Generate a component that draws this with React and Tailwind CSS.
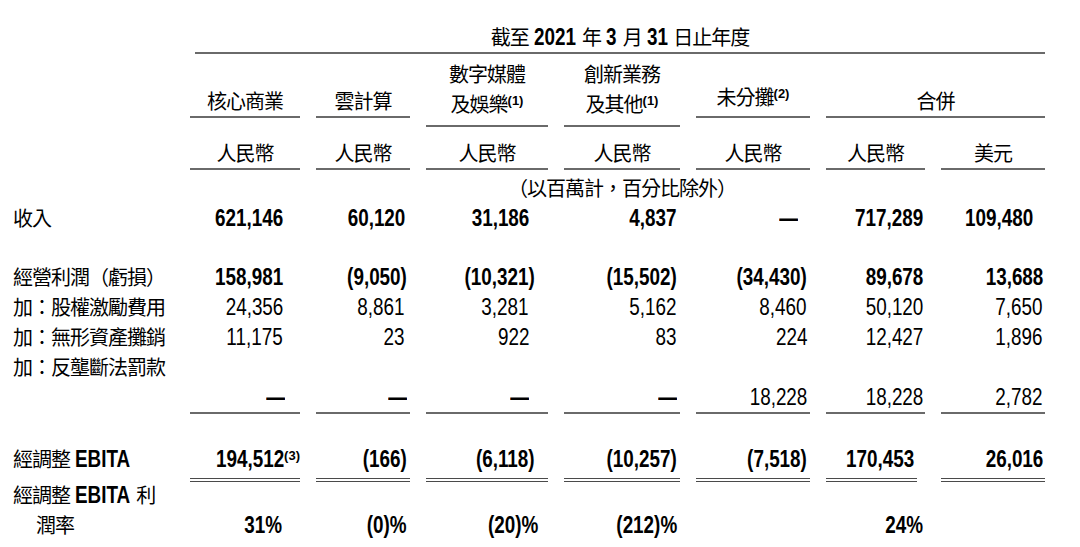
import React from 'react';

const NUM = "font-['Liberation_Sans',sans-serif] text-[23px] tracking-normal";
const CJK = "font-['Noto_Sans_CJK_TC','Noto_Sans_CJK_SC',sans-serif] text-[20px] tracking-[-1px]";
const SUP = "relative -top-[7px] font-['Liberation_Sans',sans-serif] text-[13px] font-bold tracking-normal";
const GRID = 'grid grid-cols-[161px_110px_94px_122px_116px_114px_99px_104px] gap-x-4';
const LINE = 'border-b-2 border-[#6a6a6a]';
const DOUBLE = 'border-b-4 border-double border-[#4a4a4a]';

// right padding per column, plain numbers and numbers in brackets
const pad = ['pr-[17px]', 'pr-[5px]', 'pr-[19px]', 'pr-[3px]', 'pr-[3px]', 'pr-[2px]', 'pr-[2px]'];
const padParen = ['pr-[17px]', 'pr-[3px]', 'pr-[13px]', 'pr-[3px]', 'pr-[3px]', 'pr-[2px]', 'pr-[2px]'];

// narrow figures inside running text: scaled, with the spare width taken back by a negative margin
const Narrow = ({ children, mr }) => (
	<span className={`${NUM} font-bold inline-block scale-x-[0.82] origin-left ml-[2px] ${mr}`}>{children}</span>
);

const rows = [
	{
		label: '收入', bold: true, mt: 'mt-0',
		values: ['621,146', '60,120', '31,186', '4,837', ['—', 'pr-[12px]'], '717,289', ['109,480', 'pr-[12px]']]
	},
	{
		label: '經營利潤（虧損）', bold: true, mt: 'mt-[29px]',
		values: ['158,981', '(9,050)', '(10,321)', '(15,502)', '(34,430)', '89,678', '13,688']
	},
	{
		label: '加：股權激勵費用', mt: 'mt-0',
		values: ['24,356', '8,861', '3,281', '5,162', '8,460', '50,120', '7,650']
	},
	{
		label: '加：無形資產攤銷', mt: 'mt-0',
		values: ['11,175', '23', '922', '83', '224', '12,427', '1,896']
	},
	{
		label: '加：反壟斷法罰款', mt: 'mt-0',
		values: ['', '', '', '', '', '', '']
	},
	{
		label: '', mt: 'mt-0', line: LINE,
		values: [['—', 'pr-[15px] font-bold'], ['—', 'pr-[3px] font-bold'], ['—', 'pr-[19px] font-bold'], ['—', 'pr-[3px] font-bold'], '18,228', '18,228', '2,782']
	},
	{
		label: <>經調整 <Narrow mr="-mr-[10px]">EBITA</Narrow></>, bold: true, mt: 'mt-[30px]', line: DOUBLE,
		values: [
			['194,512', 'pr-0', <span className={SUP}>(3)</span>],
			'(166)', '(6,118)', '(10,257)', '(7,518)',
			['170,453', 'pr-[3px] mr-[8px]'],
			'26,016'
		]
	}
];

function Cell({ v, i, line, bold }) {
	const [text, pr, after] = Array.isArray(v) ? v : [v, null, null];
	const p = pr || (text.startsWith('(') ? padParen[i] : pad[i]);
	return (
		<div className={`${NUM} ${bold ? 'font-bold' : ''} text-right ${p} ${text === '' ? '' : line || ''}`}>
			{text === '' ? '\u00a0' : <span className="inline-block scale-x-[0.82] origin-right">{text}</span>}
			{after}
		</div>
	);
}

export default function App() {
	return (
		<div className="w-[1080px] h-[547px] overflow-hidden bg-white pl-[13px] text-black leading-[30px]">
			<div className={`${GRID} h-[54px] items-end`}>
				<div className={`col-start-2 col-span-7 ml-[5px] text-center ${CJK} ${LINE}`}>
					截至 <Narrow mr="-mr-[7px]">2021</Narrow> 年 <Narrow mr="mr-0">3</Narrow> 月 <Narrow mr="-mr-[3px]">31</Narrow> 日止年度
				</div>
			</div>

			<div className={`${GRID} h-[73px] items-end ${CJK}`}>
				<div></div>
				<div className={`text-center mb-[9px] ${LINE}`}>核心商業</div>
				<div className={`text-center mb-[9px] ${LINE}`}>雲計算</div>
				<div className={`text-center pb-[2px] ${LINE}`}>
					<div>數字媒體</div>
					<div>及娛樂<span className={SUP}>(1)</span></div>
				</div>
				<div className={`text-center pb-[2px] ${LINE}`}>
					<div>創新業務</div>
					<div>及其他<span className={SUP}>(1)</span></div>
				</div>
				<div className={`text-center mb-[9px] ${LINE}`}>未分攤<span className={SUP}>(2)</span></div>
				<div className={`col-span-2 text-center mb-[9px] ${LINE}`}>合併</div>
			</div>

			<div className={`${GRID} mt-[11px] ${CJK}`}>
				<div></div>
				<div className={`text-center ${LINE}`}>人民幣</div>
				<div className={`text-center ${LINE}`}>人民幣</div>
				<div className={`text-center ${LINE}`}>人民幣</div>
				<div className={`text-center ${LINE}`}>人民幣</div>
				<div className={`text-center ${LINE}`}>人民幣</div>
				<div className={`text-center ${LINE}`}>人民幣</div>
				<div className={`text-center ${LINE}`}>美元</div>
			</div>

			<div className={`${GRID} mt-[3px]`}>
				<div className={`col-start-2 col-span-7 pl-[9px] text-center ${CJK}`}>（以百萬計，百分比除外）</div>
			</div>

			{rows.map((r, idx) => (
				<div key={idx} className={`${GRID} ${r.mt}`}>
					<div className={CJK}>{r.label === '' ? '\u00a0' : r.label}</div>
					{r.values.map((v, i) => (
						<Cell key={i} v={v} i={i} line={r.line} bold={r.bold} />
					))}
				</div>
			))}

			<div className={`${GRID} -mt-[2px] items-end`}>
				<div className={CJK}>
					<div>經調整 <Narrow mr="-mr-[10px]">EBITA</Narrow> 利</div>
					<div className="pl-[23px]">潤率</div>
				</div>
				<Cell v={['31%', 'pr-[18px]']} i={0} bold />
				<Cell v="(0)%" i={1} bold />
				<Cell v={['(20)%', 'pr-[10px]']} i={2} bold />
				<Cell v="(212)%" i={3} bold />
				<div></div>
				<Cell v="24%" i={5} bold />
				<div></div>
			</div>
		</div>
	);
}
